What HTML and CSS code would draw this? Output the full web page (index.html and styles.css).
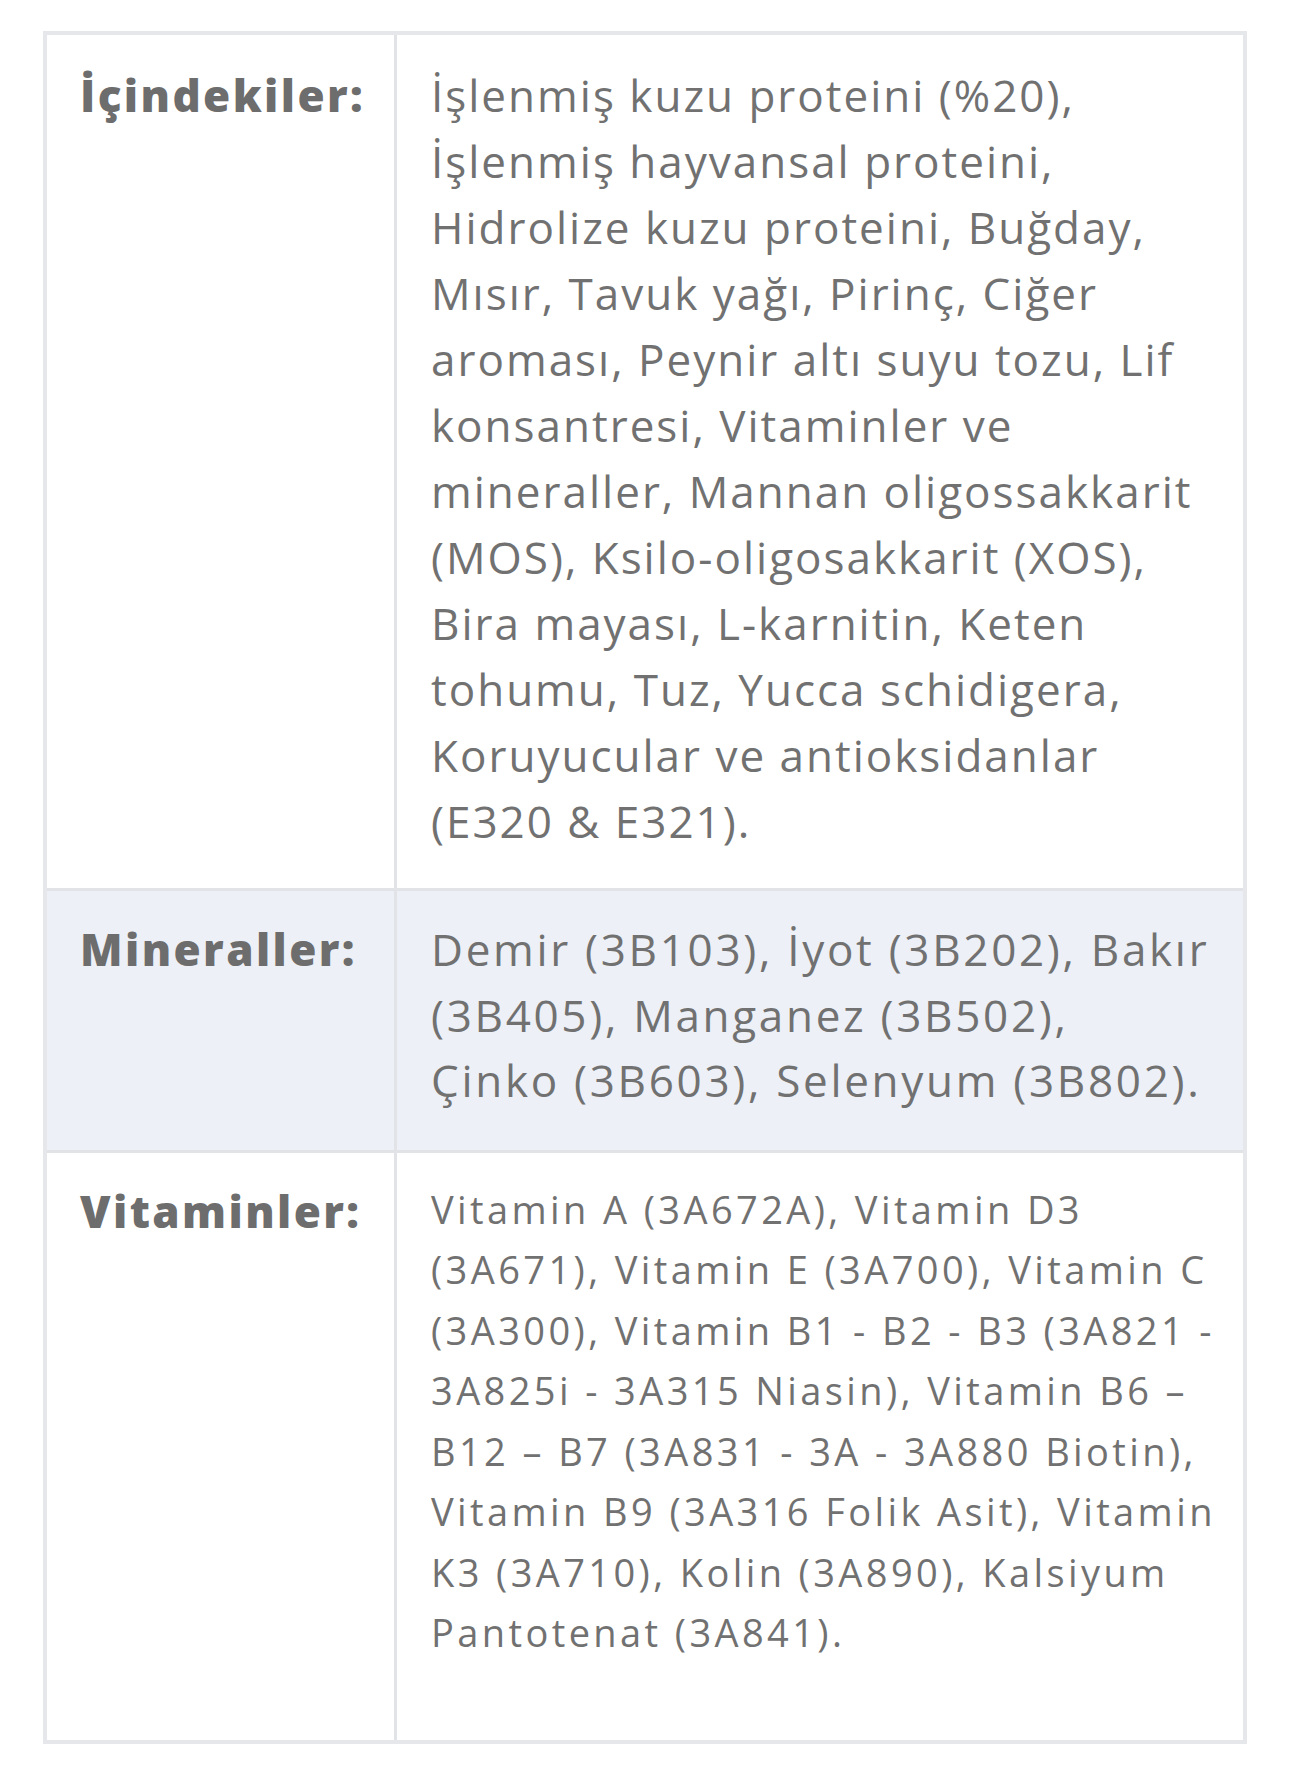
FILE: index.html
```html
<!DOCTYPE html>
<html lang="tr">
<head>
<meta charset="utf-8">
<title>İçerik</title>
<link rel="stylesheet" href="styles.css">
</head>
<body>
<div class="spec">
  <div class="row first">
    <div class="label">İçindekiler:</div>
    <div class="value">İşlenmiş kuzu proteini (%20),<br>İşlenmiş hayvansal proteini,<br>Hidrolize kuzu proteini, Buğday,<br>Mısır, Tavuk yağı, Pirinç, Ciğer<br>aroması, Peynir altı suyu tozu, Lif<br>konsantresi, Vitaminler ve<br>mineraller, Mannan oligossakkarit<br>(MOS), Ksilo-oligosakkarit (XOS),<br>Bira mayası, L-karnitin, Keten<br>tohumu, Tuz, Yucca schidigera,<br>Koruyucular ve antioksidanlar<br>(E320 &amp; E321).</div>
  </div>
  <div class="row alt">
    <div class="label">Mineraller:</div>
    <div class="value">Demir (3B103), İyot (3B202), Bakır<br>(3B405), Manganez (3B502),<br>Çinko (3B603), Selenyum (3B802).</div>
  </div>
  <div class="row last">
    <div class="label">Vitaminler:</div>
    <div class="value small">Vitamin A (3A672A), Vitamin D3<br>(3A671), Vitamin E (3A700), Vitamin C<br>(3A300), Vitamin B1 - B2 - B3 (3A821 -<br>3A825i - 3A315 Niasin), Vitamin B6 –<br>B12 – B7 (3A831 - 3A - 3A880 Biotin),<br>Vitamin B9 (3A316 Folik Asit), Vitamin<br>K3 (3A710), Kolin (3A890), Kalsiyum<br>Pantotenat (3A841).</div>
  </div>
</div>
</body>
</html>
```
FILE: styles.css
```css
html, body {
  margin: 0;
  padding: 0;
  background: #ffffff;
}
body {
  padding: 31px 0 0 43px;
  font-family: "Open Sans", "Liberation Sans", sans-serif;
  color: #717171;
}
.spec {
  width: 1196px;
  border: 4px solid #e5e7ea;
  display: flex;
  flex-direction: column;
}
.row {
  display: grid;
  grid-template-columns: 350px 1fr;
  border-bottom: 3px solid #e1e3e7;
  background: #ffffff;
}
.row.last {
  border-bottom: none;
}
.row.alt {
  background: #edf0f6;
}
.label {
  border-right: 3px solid #e1e3e7;
  padding: 26px 6px 0 33px;
  font-weight: 800;
  font-size: 44px;
  line-height: 65.6px;
  letter-spacing: 2.4px;
  color: #6d6d6d;
  white-space: nowrap;
}
.value {
  padding: 26px 10px 36px 34px;
  font-weight: 400;
  font-size: 44px;
  line-height: 65.6px;
  letter-spacing: 2.7px;
  white-space: nowrap;
}
.row.first .label {
  padding-top: 27px;
  line-height: 66px;
}
.row.first .value {
  padding-top: 27px;
  padding-bottom: 34px;
  line-height: 66px;
  letter-spacing: 2px;
}
.value.small {
  font-size: 38px;
  line-height: 60.5px;
  letter-spacing: 3.4px;
  padding-top: 26px;
  padding-bottom: 77px;
}
```
